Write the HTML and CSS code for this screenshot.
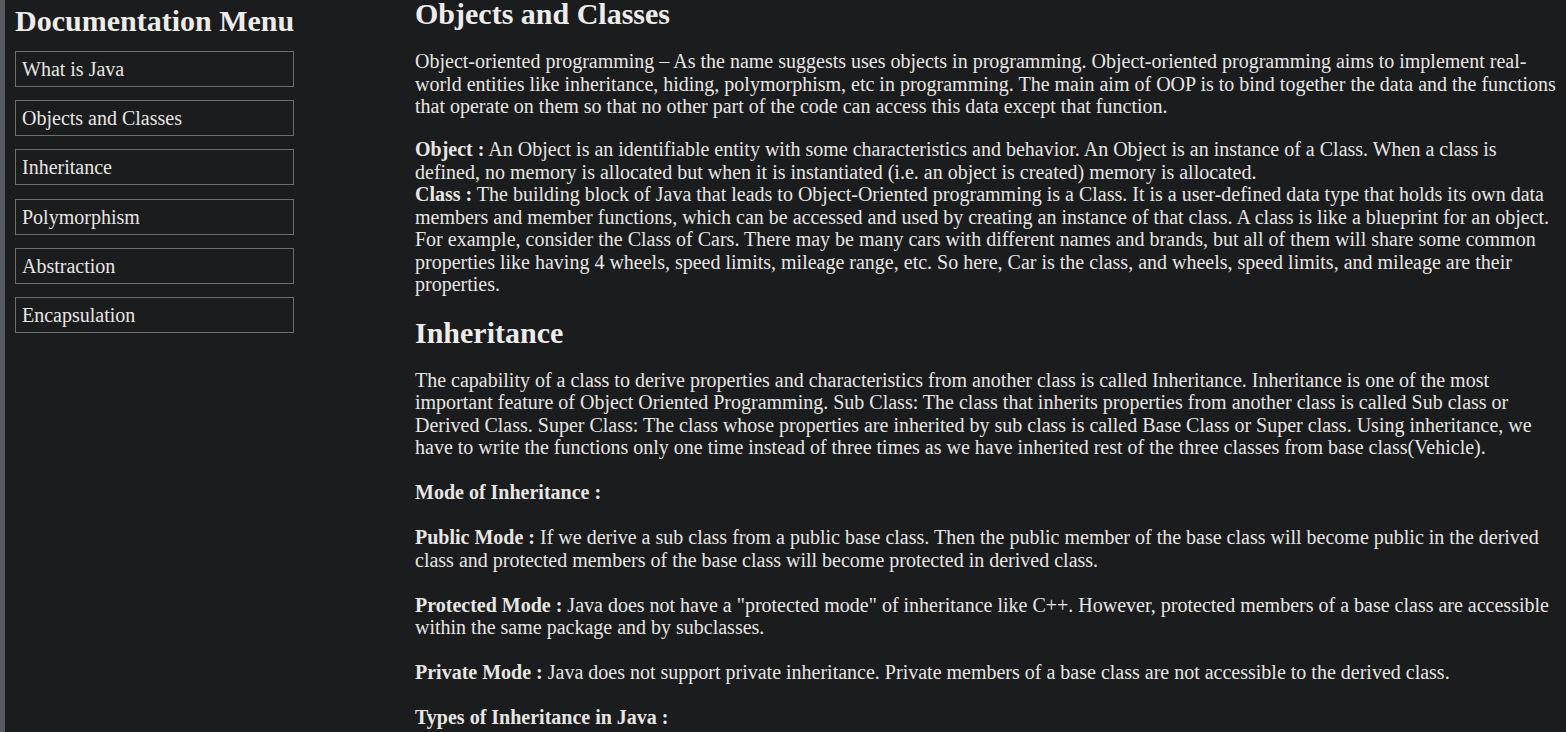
FILE: index.html
```html
<!DOCTYPE html>
<html lang="en">
<head>
<meta charset="utf-8">
<title>Java Documentation</title>
<link rel="stylesheet" href="styles.css">
</head>
<body>
<div class="page">
  <nav class="sidebar">
    <h1 class="menu-title">Documentation Menu</h1>
    <ul class="menu">
      <li><a class="menu-link" href="#java">What is Java</a></li>
      <li><a class="menu-link" href="#objects">Objects and Classes</a></li>
      <li><a class="menu-link" href="#inheritance">Inheritance</a></li>
      <li><a class="menu-link" href="#poly">Polymorphism</a></li>
      <li><a class="menu-link" href="#abstraction">Abstraction</a></li>
      <li><a class="menu-link" href="#encap">Encapsulation</a></li>
    </ul>
  </nav>
  <main class="content">
    <section class="doc-section first" id="objects">
      <h2 class="section-title">Objects and Classes</h2>
      <p>Object-oriented programming – As the name suggests uses objects in programming. Object-oriented programming aims to implement real-world entities like inheritance, hiding, polymorphism, etc in programming. The main aim of OOP is to bind together the data and the functions that operate on them so that no other part of the code can access this data except that function.</p>
      <p><b>Object :</b> An Object is an identifiable entity with some characteristics and behavior. An Object is an instance of a Class. When a class is defined, no memory is allocated but when it is instantiated (i.e. an object is created) memory is allocated.<br><b>Class :</b> The building block of Java that leads to Object-Oriented programming is a Class. It is a user-defined data type that holds its own data members and member functions, which can be accessed and used by creating an instance of that class. A class is like a blueprint for an object. For example, consider the Class of Cars. There may be many cars with different names and brands, but all of them will share some common properties like having 4 wheels, speed limits, mileage range, etc. So here, Car is the class, and wheels, speed limits, and mileage are their properties.</p>
    </section>
    <section class="doc-section" id="inheritance">
      <h2 class="section-title">Inheritance</h2>
      <p>The capability of a class to derive properties and characteristics from another class is called Inheritance. Inheritance is one of the most important feature of Object Oriented Programming. Sub Class: The class that inherits properties from another class is called Sub class or Derived Class. Super Class: The class whose properties are inherited by sub class is called Base Class or Super class. Using inheritance, we have to write the functions only one time instead of three times as we have inherited rest of the three classes from base class(Vehicle).</p>
      <p><b>Mode of Inheritance :</b></p>
      <p><b>Public Mode :</b> If we derive a sub class from a public base class. Then the public member of the base class will become public in the derived class and protected members of the base class will become protected in derived class.</p>
      <p><b>Protected Mode :</b> Java does not have a "protected mode" of inheritance like C++. However, protected members of a base class are accessible within the same package and by subclasses.</p>
      <p><b>Private Mode :</b> Java does not support private inheritance. Private members of a base class are not accessible to the derived class.</p>
      <p><b>Types of Inheritance in Java :</b></p>
    </section>
  </main>
</div>
</body>
</html>
```
FILE: styles.css
```css
html, body {
  margin: 0;
  padding: 0;
  height: 100%;
  overflow: hidden;
}
body {
  background: #1b1c1e;
  color: #e8e6e3;
  font-family: "Liberation Serif", "Times New Roman", serif;
  font-size: 20px;
  line-height: 22.5px;
}
.page {
  display: flex;
  height: 100%;
  border-left: 5px solid #575a5f;
  box-sizing: border-box;
}
.sidebar {
  flex: 0 0 410px;
  padding-left: 10px;
  box-sizing: border-box;
}
.menu-title {
  font-size: 30px;
  line-height: 34px;
  margin: 4px 0 13px;
  font-weight: bold;
  color: #eeecea;
}
.menu {
  list-style: none;
  margin: 0;
  padding: 0;
  width: 279px;
  display: flex;
  flex-direction: column;
  gap: 13.2px;
}
.menu-link {
  display: block;
  border: 1px solid #6e6e6e;
  padding: 6px 6px;
  line-height: 22px;
  color: #e8e6e3;
  text-decoration: none;
}
.content {
  flex: 1;
  padding-right: 6px;
  min-width: 0;
}
.section-title {
  font-size: 30px;
  line-height: 28px;
  margin: 23px 0 22px;
  font-weight: bold;
  color: #eeecea;
}
.doc-section.first .section-title {
  margin-top: 0;
}
.content p {
  margin: 22.5px 0;
}
.doc-section.first p {
  margin: 20.5px 0;
}
.content .section-title + p {
  margin-top: 0;
}
```
